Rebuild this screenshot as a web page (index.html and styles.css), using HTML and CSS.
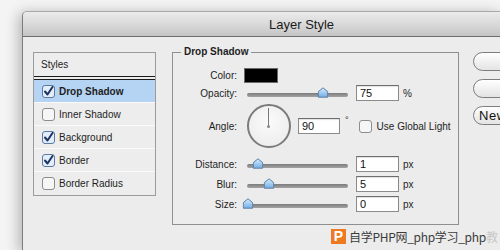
FILE: index.html
```html
<!DOCTYPE html>
<html>
<head>
<meta charset="utf-8">
<link rel="stylesheet" href="styles.css">
</head>
<body>
<div class="window">
  <div class="titlebar">Layer Style</div>
  <div class="content">
    <div class="styles-panel">
      <div class="panel-head">Styles</div>
      <div class="style-row selected">
        <svg class="cb" width="13" height="13" viewBox="0 0 13 13"><rect x="0.5" y="0.5" width="12" height="12" rx="2.5" class="cb-on"/><path d="M3 6.5 L5.5 9.5 L10.5 2" class="tick"/></svg>
        <span class="bold">Drop Shadow</span>
      </div>
      <div class="style-row">
        <svg class="cb" width="13" height="13" viewBox="0 0 13 13"><rect x="0.5" y="0.5" width="12" height="12" rx="2.5" class="cb-off"/></svg>
        <span>Inner Shadow</span>
      </div>
      <div class="style-row">
        <svg class="cb" width="13" height="13" viewBox="0 0 13 13"><rect x="0.5" y="0.5" width="12" height="12" rx="2.5" class="cb-on"/><path d="M3 6.5 L5.5 9.5 L10.5 2" class="tick"/></svg>
        <span>Background</span>
      </div>
      <div class="style-row">
        <svg class="cb" width="13" height="13" viewBox="0 0 13 13"><rect x="0.5" y="0.5" width="12" height="12" rx="2.5" class="cb-on"/><path d="M3 6.5 L5.5 9.5 L10.5 2" class="tick"/></svg>
        <span>Border</span>
      </div>
      <div class="style-row last">
        <svg class="cb" width="13" height="13" viewBox="0 0 13 13"><rect x="0.5" y="0.5" width="12" height="12" rx="2.5" class="cb-off"/></svg>
        <span>Border Radius</span>
      </div>
    </div>

    <fieldset class="group">
      <legend>Drop Shadow</legend>
      <div class="rows">
        <div class="row r-color">
          <span class="lbl">Color:</span>
          <span class="swatch"></span>
        </div>
        <div class="row r-opacity">
          <span class="lbl">Opacity:</span>
          <span class="slider"><span class="track"></span><svg class="thumb" style="left:79px" width="11" height="11" viewBox="0 0 11 11"><defs><linearGradient id="tg1" x1="0" y1="0" x2="0" y2="1"><stop offset="0" stop-color="#d6ecff"/><stop offset="1" stop-color="#72aee6"/></linearGradient></defs><path d="M5.5 0.8 L10.2 4.6 L10.2 10.2 L0.8 10.2 L0.8 4.6 Z" fill="url(#tg1)" stroke="#5f7f9f" stroke-linejoin="round"/></svg></span>
          <span class="field">75</span>
          <span class="unit">%</span>
        </div>
        <div class="row r-angle">
          <span class="lbl">Angle:</span>
          <span class="dial"><span class="needle"></span><span class="hub"></span></span>
          <span class="field f-angle">90</span>
          <span class="deg">°</span>
          <svg class="cb cb-global" width="13" height="13" viewBox="0 0 13 13"><rect x="0.5" y="0.5" width="12" height="12" rx="2.5" class="cb-off"/></svg>
          <span class="global">Use Global Light</span>
        </div>
        <div class="row r-slider first">
          <span class="lbl">Distance:</span>
          <span class="slider"><span class="track"></span><svg class="thumb" style="left:14px" width="11" height="11" viewBox="0 0 11 11"><defs><linearGradient id="tg2" x1="0" y1="0" x2="0" y2="1"><stop offset="0" stop-color="#d6ecff"/><stop offset="1" stop-color="#72aee6"/></linearGradient></defs><path d="M5.5 0.8 L10.2 4.6 L10.2 10.2 L0.8 10.2 L0.8 4.6 Z" fill="url(#tg2)" stroke="#5f7f9f" stroke-linejoin="round"/></svg></span>
          <span class="field">1</span>
          <span class="unit">px</span>
        </div>
        <div class="row r-slider">
          <span class="lbl">Blur:</span>
          <span class="slider"><span class="track"></span><svg class="thumb" style="left:25px" width="11" height="11" viewBox="0 0 11 11"><defs><linearGradient id="tg3" x1="0" y1="0" x2="0" y2="1"><stop offset="0" stop-color="#d6ecff"/><stop offset="1" stop-color="#72aee6"/></linearGradient></defs><path d="M5.5 0.8 L10.2 4.6 L10.2 10.2 L0.8 10.2 L0.8 4.6 Z" fill="url(#tg3)" stroke="#5f7f9f" stroke-linejoin="round"/></svg></span>
          <span class="field">5</span>
          <span class="unit">px</span>
        </div>
        <div class="row r-slider">
          <span class="lbl">Size:</span>
          <span class="slider"><span class="track"></span><svg class="thumb" style="left:4px" width="11" height="11" viewBox="0 0 11 11"><defs><linearGradient id="tg4" x1="0" y1="0" x2="0" y2="1"><stop offset="0" stop-color="#d6ecff"/><stop offset="1" stop-color="#72aee6"/></linearGradient></defs><path d="M5.5 0.8 L10.2 4.6 L10.2 10.2 L0.8 10.2 L0.8 4.6 Z" fill="url(#tg4)" stroke="#5f7f9f" stroke-linejoin="round"/></svg></span>
          <span class="field">0</span>
          <span class="unit">px</span>
        </div>
      </div>
    </fieldset>

    <div class="buttons">
      <div class="btn">OK</div>
      <div class="btn">Cancel</div>
      <div class="btn btn-left">New Style...</div>
    </div>
  </div>
</div>
<div class="watermark"><span class="wm-logo">P</span><span class="wm-text">自学PHP网_php学习_php<span class="wm-fade">教</span></span></div>
</body>
</html>
```

FILE: styles.css
```css
html, body {
  margin: 0;
  padding: 0;
}
body {
  width: 500px;
  height: 250px;
  overflow: hidden;
  position: relative;
  background: #f4f4f4;
  font-family: "Liberation Sans", Arial, sans-serif;
  font-size: 10px;
  color: #1e1e1e;
}
.window {
  margin: 11px 0 0 22px;
  width: 478px;
  height: 239px;
  overflow: hidden;
  border-left: 1px solid #7c7c7c;
  border-top: 1px solid #a8a8a8;
  border-top-left-radius: 5px;
  background: #ececec;
  box-shadow: -3px 2px 14px rgba(0, 0, 0, 0.28);
}
.titlebar {
  height: 24px;
  line-height: 25px;
  padding-left: 246px;
  font-size: 13px;
  color: #1a1a1a;
  background: linear-gradient(#ebebeb, #d6d6d6 60%, #c4c4c4);
  border-bottom: 1px solid #6d6d6d;
  border-top-left-radius: 4px;
}
.content {
  display: flex;
  align-items: flex-start;
  padding: 15px 0 0 10px;
}
/* Styles list */
.styles-panel {
  flex: none;
  width: 121px;
  border: 1px solid #9b9b9b;
  background: #ededed;
}
.panel-head {
  height: 23px;
  line-height: 23px;
  padding-left: 7px;
  border-bottom: 4px double #1b1b1b;
}
.style-row {
  height: 22px;
  display: flex;
  align-items: center;
  padding-left: 8px;
  gap: 4px;
  border-bottom: 1px solid #fafafa;
}
.style-row.last {
  border-bottom: none;
  height: 23px;
}
.style-row.selected {
  background: #b5d3f3;
}
.bold {
  font-weight: bold;
}
.cb {
  display: block;
  flex: none;
}
.cb-off {
  fill: #f6f6f6;
  stroke: #8d8d8d;
}
.cb-on {
  fill: #e3eefa;
  stroke: #5a79a3;
}
.tick {
  fill: none;
  stroke: #1d3463;
  stroke-width: 2;
  stroke-linecap: round;
  stroke-linejoin: round;
}
/* Fieldset */
.group {
  flex: none;
  box-sizing: border-box;
  width: 287px;
  margin: -6px 0 0 16px;
  padding: 0 0 10px 0;
  border: 1px solid #8f8f8f;
  min-width: 0;
}
.group legend {
  margin-left: 8px;
  padding: 0 3px;
  font-weight: bold;
  line-height: 12px;
  font-size: 10px;
}
.rows {
  padding-top: 8px;
}
.row {
  display: flex;
  align-items: center;
}
.lbl {
  width: 64px;
  margin-right: 7px;
  text-align: right;
  flex: none;
}
.r-color {
  height: 18px;
}
.swatch {
  width: 32px;
  height: 13px;
  background: #000;
  border: 1px solid #6a6a6a;
}
.r-opacity {
  height: 18px;
}
.r-angle {
  height: 46px;
  margin-top: 1px;
}
.r-slider {
  height: 20px;
}
.r-slider.first {
  margin-top: 5px;
}
.slider {
  position: relative;
  width: 104px;
  height: 12px;
  flex: none;
}
.track {
  position: absolute;
  left: 3px;
  right: 0;
  top: 6px;
  height: 4px;
  border-radius: 2px;
  background: linear-gradient(#7c7c7c, #a3a3a3);
}
.thumb {
  position: absolute;
  top: 0;
  transform: translateX(-50%);
}
.field {
  flex: none;
  box-sizing: border-box;
  width: 43px;
  height: 16px;
  margin-left: 8px;
  padding-left: 3px;
  line-height: 15px;
  font-size: 11px;
  color: #111;
  background: #fff;
  border: 1px solid #8b8b8b;
  border-top-color: #6e6e6e;
  box-shadow: inset 0 1px 1px rgba(0, 0, 0, 0.12);
}
.unit {
  margin-left: 4px;
}
.dial {
  position: relative;
  box-sizing: border-box;
  width: 44px;
  height: 44px;
  margin-left: 3px;
  border-radius: 50%;
  border: 2px solid #7b7b7b;
  background: radial-gradient(circle at 50% 40%, #fbfbfb, #e9e9e9);
  flex: none;
}
.needle {
  position: absolute;
  left: 19px;
  top: 2px;
  width: 1px;
  height: 18px;
  background: #7a7a7a;
}
.hub {
  position: absolute;
  left: 18px;
  top: 19px;
  width: 3px;
  height: 3px;
  border-radius: 50%;
  background: #8a8a8a;
}
.f-angle {
  width: 42px;
  margin-left: 7px;
}
.deg {
  margin-left: 5px;
  align-self: flex-start;
  margin-top: 12px;
  font-size: 9px;
}
.cb-global {
  margin-left: 10px;
}
.global {
  margin-left: 5px;
  white-space: nowrap;
}
/* buttons */
.buttons {
  flex: none;
  margin-left: 14px;
  display: flex;
  flex-direction: column;
  gap: 8px;
}
.btn {
  box-sizing: border-box;
  width: 110px;
  height: 19px;
  border: 1px solid #7d7d7d;
  border-radius: 10px;
  background: linear-gradient(#ffffff, #f1f1f1 50%, #e4e4e4);
  font-size: 13px;
  line-height: 17px;
  text-align: center;
  color: #111;
  white-space: nowrap;
}
.btn-left {
  text-align: left;
  padding-left: 5px;
  letter-spacing: 0.6px;
}
/* watermark */
.watermark {
  position: absolute;
  left: 331px;
  top: 229px;
  display: flex;
  align-items: center;
  gap: 3px;
}
.wm-logo {
  width: 15px;
  height: 15px;
  background: #ee7a22;
  color: #fff;
  font-weight: bold;
  font-size: 14px;
  line-height: 15px;
  text-align: center;
  font-family: "Liberation Sans", Arial, sans-serif;
}
.wm-text {
  font-family: "Noto Sans CJK SC", "Noto Sans", sans-serif;
  font-size: 12px;
  line-height: 15px;
  color: #3c3c3c;
  letter-spacing: -0.3px;
}
.wm-fade {
  color: #c8c8c8;
}
```
